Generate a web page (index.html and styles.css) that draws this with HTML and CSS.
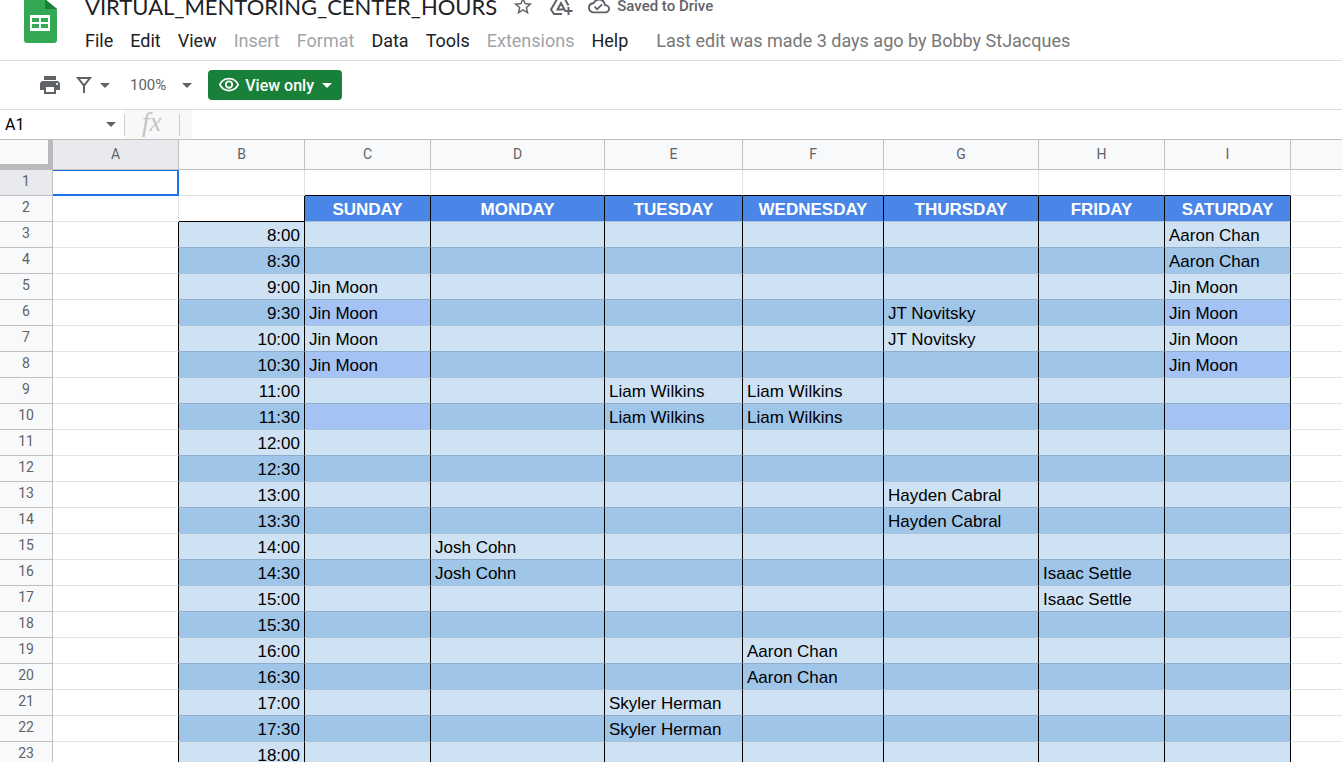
FILE: index.html
```
<!DOCTYPE html>
<html lang="en">
<head>
<meta charset="utf-8">
<title>VIRTUAL_MENTORING_CENTER_HOURS</title>
<link rel="stylesheet" href="styles.css">
</head>
<body>
<header class="app-header">
  <svg class="logo" viewBox="0 0 33 43" width="33" height="43" aria-hidden="true">
    <path fill="#34a853" d="M0 0H22L33 9V40a3 3 0 0 1-3 3H3a3 3 0 0 1-3-3z"/>
    <path fill="#188038" d="M21 0h1l11 9H21z"/>
    <path fill="#fff" fill-rule="evenodd" d="M6 15h20v16H6zM8 18v4h7v-4zM17 18v4h7v-4zM8 24v4h7v-4zM17 24v4h7v-4z"/>
  </svg>
  <div class="header-main">
    <div class="title-row">
      <h1 class="doc-title">VIRTUAL_MENTORING_CENTER_HOURS</h1>
      <button type="button" aria-label="Star"><svg viewBox="0 0 24 24" width="22" height="22"><path d="M22 9.24l-7.19-.62L12 2 9.19 8.63 2 9.24l5.46 4.73L5.82 21 12 17.27 18.18 21l-1.63-7.03L22 9.24zM12 15.4l-3.76 2.27 1-4.28-3.32-2.88 4.38-.38L12 6.1l1.71 4.04 4.38.38-3.32 2.88 1 4.28L12 15.4z"/></svg></button>
      <button type="button" aria-label="Add shortcut to Drive"><svg class="outline" viewBox="0 0 24 24" width="24" height="24"><path d="M13 20H5L2 15.500 9 3.500h6l4.500 8M8.500 15.500l3.500-6.500 3.500 6.500zM19.500 13v8M15.500 17h8"/></svg></button>
      <button class="saved" type="button"><svg viewBox="0 0 24 24" width="22" height="22"><path d="M19.350 10.040A7.490 7.490 0 0 0 12 4C9.110 4 6.600 5.640 5.350 8.040A5.994 5.994 0 0 0 0 14c0 3.310 2.690 6 6 6h13c2.760 0 5-2.240 5-5 0-2.640-2.050-4.780-4.650-4.960zM19 18H6c-2.210 0-4-1.790-4-4 0-2.050 1.530-3.760 3.560-3.970l1.070-.11.5-.95A5.469 5.469 0 0 1 12 6c2.620 0 4.880 1.860 5.390 4.430l.3 1.500 1.530.11A2.980 2.980 0 0 1 22 15c0 1.650-1.350 3-3 3zm-9-3.820-2.090-2.090L6.500 13.500 10 17l6.010-6.010-1.410-1.410z"/></svg><span>Saved to Drive</span></button>
    </div>
    <nav class="menu">
      <button type="button">File</button>
      <button type="button">Edit</button>
      <button type="button">View</button>
      <button type="button" disabled>Insert</button>
      <button type="button" disabled>Format</button>
      <button type="button">Data</button>
      <button type="button">Tools</button>
      <button type="button" disabled>Extensions</button>
      <button type="button">Help</button>
      <a class="last-edit" href="#">Last edit was made 3 days ago by Bobby StJacques</a>
    </nav>
  </div>
</header>
<div class="toolbar">
  <button type="button" aria-label="Print"><svg viewBox="0 0 24 24" width="24" height="24"><path d="M19 8H5c-1.660 0-3 1.340-3 3v6h4v4h12v-4h4v-6c0-1.660-1.340-3-3-3zm-3 11H8v-5h8v5zm3-7c-.55 0-1-.45-1-1s.45-1 1-1 1 .45 1 1-.45 1-1 1zm-1-9H6v4h12V3z"/></svg></button>
  <button class="filter" type="button" aria-label="Filter views"><svg viewBox="0 0 16 16" width="16" height="16"><path fill-rule="evenodd" d="M0 0h16L9 9v7H7V9zM4 2l4 5 4-5z"/></svg><i class="caret"></i></button>
  <button class="zoom" type="button">100%<i class="caret"></i></button>
  <button class="view-only" type="button"><svg viewBox="0 0 24 24" width="22" height="22"><path d="M12 6a9.770 9.770 0 0 1 8.820 5.500 9.760 9.760 0 0 1-17.640 0A9.770 9.770 0 0 1 12 6m0-2C7 4 2.730 7.110 1 11.500 2.730 15.890 7 19 12 19s9.270-3.110 11-7.500C21.270 7.110 17 4 12 4zm0 5a2.500 2.500 0 0 1 0 5 2.500 2.500 0 0 1 0-5m0-2a4.500 4.500 0 1 0 0 9 4.500 4.500 0 0 0 0-9z"/></svg><span>View only</span><i class="caret"></i></button>
</div>
<div class="formula-bar">
  <label class="name-box"><input type="text" value="A1" aria-label="Name box"><i class="caret"></i></label>
  <span class="fx">fx</span>
  <input class="formula" type="text" aria-label="Formula">
</div>
<main class="sheet">
  <table class="grid">
    <colgroup><col class="w-head"><col class="w-s"><col class="w-s"><col class="w-s"><col class="w-mon"><col class="w-tue"><col class="w-wed"><col class="w-thu"><col class="w-s"><col class="w-s"><col></colgroup>
    <thead><tr><th class="corner"></th><th class="selected">A</th><th>B</th><th>C</th><th>D</th><th>E</th><th>F</th><th>G</th><th>H</th><th>I</th><th></th></tr></thead>
    <tbody id="rows"></tbody>
  </table>
</main>
<script src="sheet.js"></script>
</body>
</html>
```
FILE: sheet.js
```
const days = ["SUNDAY", "MONDAY", "TUESDAY", "WEDNESDAY", "THURSDAY", "FRIDAY", "SATURDAY"];
const shifts = {
  "8:00": { 6: "Aaron Chan" },
  "8:30": { 6: "Aaron Chan" },
  "9:00": { 0: "Jin Moon", 6: "Jin Moon" },
  "9:30": { 0: "Jin Moon", 4: "JT Novitsky", 6: "Jin Moon" },
  "10:00": { 0: "Jin Moon", 4: "JT Novitsky", 6: "Jin Moon" },
  "10:30": { 0: "Jin Moon", 6: "Jin Moon" },
  "11:00": { 2: "Liam Wilkins", 3: "Liam Wilkins" },
  "11:30": { 2: "Liam Wilkins", 3: "Liam Wilkins" },
  "13:00": { 4: "Hayden Cabral" },
  "13:30": { 4: "Hayden Cabral" },
  "14:00": { 1: "Josh Cohn" },
  "14:30": { 1: "Josh Cohn", 5: "Isaac Settle" },
  "15:00": { 5: "Isaac Settle" },
  "16:00": { 3: "Aaron Chan" },
  "16:30": { 3: "Aaron Chan" },
  "17:00": { 2: "Skyler Herman" },
  "17:30": { 2: "Skyler Herman" }
};
const violetTimes = ["9:30", "10:30", "11:30"];
const body = document.getElementById("rows");

function addRow(number, className, cells) {
  const row = body.insertRow();
  row.className = className;
  const head = document.createElement("th");
  head.scope = "row";
  head.textContent = number;
  row.append(head);
  cells.forEach(([text, cellClass]) => {
    const cell = row.insertCell();
    cell.textContent = text;
    cell.className = cellClass || "";
  });
}

addRow(1, "first", [["", "active"], [""], ...days.map(() => ["", "above"]), [""]]);
addRow(2, "days", [[""], ["", "edge above"], ...days.map(d => [d, "day"]), [""]]);
for (let i = 0; i < 21; i++) {
  const time = `${8 + Math.floor(i / 2)}:${i % 2 ? "30" : "00"}`;
  const slots = shifts[time] || {};
  addRow(i + 3, i % 2 ? "dark" : "light", [
    ["", "edge"],
    [time, "slot time"],
    ...days.map((d, n) => [slots[n] || "", violetTimes.includes(time) && n % 6 === 0 ? "slot violet" : "slot"]),
    [""]
  ]);
}
```
FILE: styles.css
```
* { box-sizing: border-box; }
body {
  margin: 0;
  height: 100vh;
  overflow: hidden;
  display: flex;
  flex-direction: column;
  background: #fff;
  font-family: Roboto, "Liberation Sans", sans-serif;
}
button, input {
  border: 0;
  padding: 0;
  margin: 0;
  background: none;
  font: inherit;
  color: inherit;
}
svg { display: block; fill: #5f6368; flex: none; }
.outline { fill: none; stroke: #5f6368; stroke-width: 2; }
.caret {
  border: 5px solid transparent;
  border-top-color: #5f6368;
  border-bottom: 0;
}

.app-header {
  display: flex;
  gap: 28px;
  flex: none;
  padding-left: 24px;
  height: 61px;
  border-bottom: 1px solid #dadce0;
}
.title-row {
  display: flex;
  align-items: center;
  gap: 15px;
  height: 12px;
}
.doc-title {
  margin: 0;
  padding-top: 2px;
  font: 400 22px/28px Lato, sans-serif;
  color: #202124;
}
.saved {
  display: flex;
  align-items: center;
  gap: 7px;
  font-size: 15px;
  font-weight: 500;
  line-height: 20px;
  color: #5f6368;
}
.menu {
  display: flex;
  gap: 17px;
  padding-top: 17px;
  font-size: 18px;
  line-height: 24px;
  color: #202124;
}
.menu button:disabled { color: #a0a4a9; }
.last-edit {
  margin-left: 11px;
  color: #777;
  text-decoration: none;
  white-space: nowrap;
}

.toolbar {
  display: flex;
  align-items: center;
  flex: none;
  height: 49px;
  padding-left: 38px;
  border-bottom: 1px solid #dadce0;
  color: #5f6368;
}
.filter {
  display: flex;
  align-items: center;
  gap: 8px;
  margin: 0 20px 0 14px;
}
.zoom {
  display: flex;
  align-items: center;
  gap: 16px;
  margin-right: 16px;
  font-size: 15px;
}
.view-only {
  display: flex;
  align-items: center;
  gap: 5px;
  height: 30px;
  padding: 0 10px;
  border-radius: 4px;
  background: #188038;
  color: #fff;
  font-size: 16px;
  font-weight: 500;
}
.view-only svg { fill: #fff; }
.view-only .caret { border-top-color: #fff; margin-left: 3px; }

.formula-bar {
  display: flex;
  flex: none;
  height: 30px;
  border-bottom: 1px solid #c0c0c0;
}
.name-box {
  display: flex;
  align-items: center;
  width: 124px;
  padding: 0 8px 0 5px;
  font-size: 16px;
}
.name-box input { flex: 1; min-width: 0; }
.fx {
  width: 68px;
  padding-left: 18px;
  background:
    linear-gradient(#ccc, #ccc) 0 4px / 1px 22px no-repeat,
    linear-gradient(#ccc, #ccc) 55px 4px / 1px 22px no-repeat,
    #f8f8f8;
  font: italic 27px/24px "Liberation Serif", serif;
  color: #c4c4c4;
}
.formula { flex: 1; }

.sheet { flex: 1; overflow: hidden; }
.grid {
  width: 100%;
  table-layout: fixed;
  border-collapse: separate;
  border-spacing: 0;
}
.w-head { width: 53px; }
.w-s { width: 126px; }
.w-mon { width: 174px; }
.w-tue { width: 138px; }
.w-wed { width: 141px; }
.w-thu { width: 155px; }
.grid th {
  padding: 0 0 4px;
  border: solid #c0c0c0;
  border-width: 0 1px 1px 0;
  background: #f8f9fb;
  font-size: 14px;
  font-weight: 400;
  line-height: 20px;
  color: #5f6368;
}
.grid thead th { height: 30px; padding: 0 0 2px; }
.grid .selected, .grid .first th { background: #e8eaed; }
.grid thead .corner {
  border-width: 0 5px 6px 0;
  border-color: #b9b9b9;
}
.grid td {
  height: 26px;
  padding: 2px 4px 0;
  border: solid #e2e3e3;
  border-width: 0 1px 1px 0;
  font-family: "Liberation Sans", Arial, sans-serif;
  font-size: 17px;
  line-height: 22px;
  white-space: nowrap;
  color: #000;
}
.grid th:last-child, .grid td:last-child { border-right: 0; }
.grid .active {
  border-right: 1px solid #1a73e8;
  border-bottom-color: #1a73e8;
  box-shadow: inset -1px -1px #1a73e8, inset 0 1px #1a73e8;
}
.grid .above { border-bottom-color: #000; }
.grid .edge { border-right-color: #000; }
.grid .day {
  padding: 2px 0 0;
  border-right-color: #000;
  border-bottom-color: #a9c3dc;
  background: #4a86e8;
  color: #fff;
  font-weight: 700;
  text-align: center;
}
.grid .slot { border-right-color: #000; }
.grid .time { text-align: right; }
.light .slot { background: #cfe2f3; border-bottom-color: #8daecd; }
.dark .slot { background: #9fc5e8; border-bottom-color: #a9c3dc; }
.grid .violet { background: #a4c2f4; }
```
